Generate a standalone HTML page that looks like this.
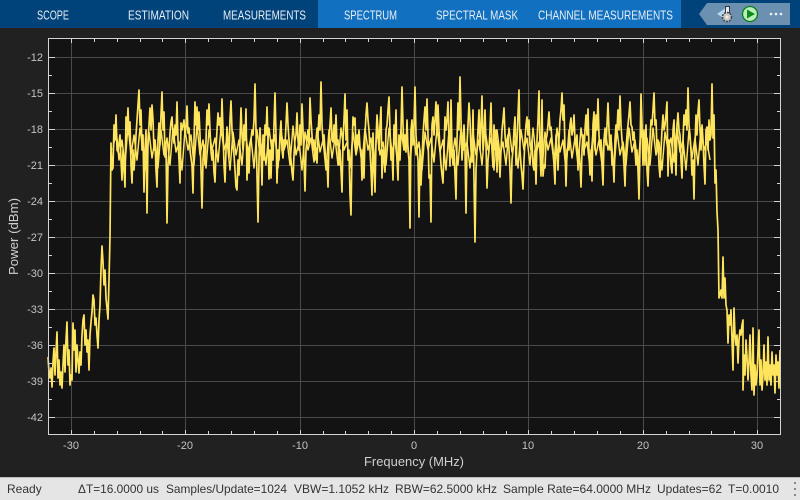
<!DOCTYPE html>
<html><head><meta charset="utf-8"><style>
html,body{margin:0;padding:0;background:#212121;width:800px;height:500px;overflow:hidden}
svg{display:block}
text{font-family:"Liberation Sans",sans-serif}
.tab{font-size:12.5px;fill:#e6eef6}
.t{font-size:11px;fill:#c4c4c4}
.s{font-size:12px;fill:#333}
</style></head><body>
<svg width="800" height="500" viewBox="0 0 800 500" xmlns="http://www.w3.org/2000/svg">
<rect width="800" height="500" fill="#212121"/>
<rect width="800" height="28" fill="#00427a"/>
<rect x="318" width="363" height="28" fill="#1170c0"/>
<text class="tab" x="37" y="19.500" textLength="32" lengthAdjust="spacingAndGlyphs">SCOPE</text>
<text class="tab" x="128" y="19.500" textLength="61" lengthAdjust="spacingAndGlyphs">ESTIMATION</text>
<text class="tab" x="223" y="19.500" textLength="83" lengthAdjust="spacingAndGlyphs">MEASUREMENTS</text>
<text class="tab" x="344" y="19.500" textLength="53" lengthAdjust="spacingAndGlyphs">SPECTRUM</text>
<text class="tab" x="436" y="19.500" textLength="82" lengthAdjust="spacingAndGlyphs">SPECTRAL MASK</text>
<text class="tab" x="538" y="19.500" textLength="135" lengthAdjust="spacingAndGlyphs">CHANNEL MEASUREMENTS</text>
<path d="M707 3H790V25H707L699 14Z" fill="#6b90b0"/>
<path d="M717 14L727 7V20Z" fill="#b5d8f5"/>
<rect x="725.500" y="6.500" width="4" height="9" fill="#e8eef3" stroke="#334" stroke-width="1"/>
<circle cx="727" cy="17" r="4.500" fill="#c8c8c8" stroke="#444" stroke-width="1.500" stroke-dasharray="2 1"/>
<circle cx="727" cy="17" r="1.500" fill="#eee"/>
<circle cx="750" cy="14" r="7.500" fill="#b8f0b8" stroke="#0e7a1e" stroke-width="1.300"/>
<path d="M747 9.500L755 14L747 18.500Z" fill="#0e8a22"/>
<circle cx="771" cy="14" r="1.300" fill="#eef3f7"/><circle cx="776" cy="14" r="1.300" fill="#eef3f7"/><circle cx="781" cy="14" r="1.300" fill="#eef3f7"/>

<rect x="48.500" y="38.500" width="732" height="396" fill="#131313"/>
<path fill="none" stroke="#4a4a4a" stroke-width="1" d="M71.500 39V434M185.500 39V434M300.500 39V434M414.500 39V434M528.500 39V434M643.500 39V434M757.500 39V434M49 57.500H780M49 93.500H780M49 129.500H780M49 165.500H780M49 201.500H780M49 237.500H780M49 273.500H780M49 309.500H780M49 345.500H780M49 381.500H780M49 417.500H780"/>
<path fill="none" stroke="#d4d4d4" stroke-width="1" d="M71.500 39v4M94.500 39v3M117.500 39v3M140.500 39v3M162.500 39v3M185.500 39v4M208.500 39v3M231.500 39v3M254.500 39v3M277.500 39v3M300.500 39v4M323.500 39v3M345.500 39v3M368.500 39v3M391.500 39v3M414.500 39v4M437.500 39v3M460.500 39v3M483.500 39v3M506.500 39v3M528.500 39v4M551.500 39v3M574.500 39v3M597.500 39v3M620.500 39v3M643.500 39v4M666.500 39v3M689.500 39v3M711.500 39v3M734.500 39v3M757.500 39v4
M71.500 434v-4M94.500 434v-3M117.500 434v-3M140.500 434v-3M162.500 434v-3M185.500 434v-4M208.500 434v-3M231.500 434v-3M254.500 434v-3M277.500 434v-3M300.500 434v-4M323.500 434v-3M345.500 434v-3M368.500 434v-3M391.500 434v-3M414.500 434v-4M437.500 434v-3M460.500 434v-3M483.500 434v-3M506.500 434v-3M528.500 434v-4M551.500 434v-3M574.500 434v-3M597.500 434v-3M620.500 434v-3M643.500 434v-4M666.500 434v-3M689.500 434v-3M711.500 434v-3M734.500 434v-3M757.500 434v-4
M49 57.500h6M49 75.500h3M49 93.500h6M49 111.500h3M49 129.500h6M49 147.500h3M49 165.500h6M49 183.500h3M49 201.500h6M49 219.500h3M49 237.500h6M49 255.500h3M49 273.500h6M49 291.500h3M49 309.500h6M49 327.500h3M49 345.500h6M49 363.500h3M49 381.500h6M49 399.500h3M49 417.500h6
M780 57.500h-6M780 75.500h-3M780 93.500h-6M780 111.500h-3M780 129.500h-6M780 147.500h-3M780 165.500h-6M780 183.500h-3M780 201.500h-6M780 219.500h-3M780 237.500h-6M780 255.500h-3M780 273.500h-6M780 291.500h-3M780 309.500h-6M780 327.500h-3M780 345.500h-6M780 363.500h-3M780 381.500h-6M780 399.500h-3M780 417.500h-6"/>

<polyline fill="none" stroke="#ffe45c" stroke-width="1.500" stroke-linejoin="round" points="113,150 116,128 119,160 122,140 125,165 128,125 131,155 134,135 137,160 140,128 143,150 146,170 149,132 152,158 155,140 158,168 161,130 164,155 167,138 170,165 173,128 176,152 179,142 182,170 185,130 188,150 191,135 194,165 197,125 200,155 203,140 206,168 209,130 212,150 215,138 218,162 221,128 224,150 227,140 230,170 233,132 236,155 239,140 242,165 245,128 248,152 251,138 254,168 257,130 260,155 263,142 266,165 269,128 272,152 275,135 278,168 281,130 284,150 287,140 290,165 293,126 296,155 299,142 302,170 305,132 308,150 311,138 314,162 317,128 320,152 323,140 326,170 329,130 332,158 335,138 338,165 341,128 344,150 347,142 350,168 353,132 356,155 359,140 362,165 365,128 368,150 371,138 374,170 377,130 380,155 383,142 386,165 389,128 392,152 395,140 398,168 401,130 404,150 407,138 410,165 413,128 416,155 419,142 422,170 425,132 428,150 431,138 434,162 437,128 440,152 443,140 446,170 449,130 452,158 455,138 458,165 461,128 464,150 467,142 470,168 473,132 476,155 479,140 482,165 485,128 488,150 491,138 494,170 497,130 500,155 503,142 506,165 509,128 512,152 515,140 518,168 521,130 524,150 527,138 530,165 533,128 536,155 539,142 542,170 545,132 548,150 551,138 554,162 557,128 560,152 563,140 566,170 569,130 572,158 575,138 578,165 581,128 584,150 587,142 590,168 593,132 596,155 599,140 602,165 605,128 608,150 611,138 614,170 617,130 620,155 623,142 626,165 629,128 632,152 635,140 638,168 641,130 644,150 647,138 650,165 653,128 656,155 659,142 662,170 665,132 668,150 671,138 674,162 677,128 680,152 683,140 686,170 689,130 692,158 695,138 698,165 701,128 704,150 707,142 710,160"/>
<polyline fill="none" stroke="#ffe45c" stroke-width="1.700" stroke-linejoin="round" points="48,357 49,372 50,378 51,368 52,387 53,362 54,348 55,375 56,352 57,332 58,378 59,360 60,385 61,372 62,388 63,365 64,345 65,372 66,340 67,322 68,365 69,350 70,385 71,375 72,380 73,323 74,350 75,330 76,372 77,345 78,360 79,373 80,352 81,365 82,335 83,320 84,315 85,345 86,330 87,352 88,340 89,370 90,335 91,322 92,312 93,295 94,300 95,325 96,318 97,335 98,348 99,320 100,305 101,270 102,246 103,262 104,285 105,270 106,298 107,308 108,319 109,280 110,237 111,143 112,170 113,168 114,125 115,140 116,115 117,150 118,152 119,143 120,135 121,160 122,180 123,150 124,170 125,187 126,117 127,130 128,108 129,135 130,122 131,165 132,183 133,150 134,170 135,155 136,135 137,120 138,105 139,90 140,125 141,110 142,150 143,135 144,192 145,150 146,130 147,213 148,140 149,125 150,108 151,130 152,105 153,120 154,150 155,140 156,170 157,187 158,140 159,123 160,145 161,115 162,92 163,130 164,112 165,157 166,145 167,223 168,165 169,150 170,133 171,122 172,117 173,135 174,143 175,125 176,135 177,102 178,140 179,160 180,183 181,123 182,130 183,125 184,120 185,135 186,128 187,106 188,133 189,128 190,150 191,158 192,165 193,193 194,140 195,102 196,125 197,107 198,130 199,112 200,135 201,170 202,208 203,160 204,145 205,165 206,140 207,110 208,125 209,104 210,130 211,152 212,160 213,150 214,172 215,182 216,150 217,130 218,113 219,125 220,118 221,135 222,99 223,130 224,165 225,182 226,150 227,127 228,140 229,158 230,120 231,101 232,130 233,145 234,155 235,170 236,187 237,190 238,160 239,175 240,140 241,108 242,135 243,150 244,125 245,140 246,109 247,180 248,150 249,173 250,145 251,140 252,130 253,135 254,120 255,84 256,130 257,175 258,222 259,160 260,128 261,150 262,185 263,135 264,160 265,125 266,135 267,107 268,140 269,179 270,150 271,178 272,140 273,160 274,125 275,93 276,135 277,183 278,150 279,160 280,135 281,121 282,150 283,158 284,140 285,145 286,125 287,103 288,125 289,140 290,150 291,160 292,172 293,180 294,155 295,140 296,135 297,113 298,140 299,150 300,125 301,145 302,104 303,130 304,160 305,191 306,150 307,140 308,130 309,145 310,98 311,120 312,135 313,150 314,140 315,160 316,148 317,163 318,135 319,115 320,130 321,82 322,125 323,140 324,135 325,150 326,165 327,160 328,187 329,140 330,125 331,108 332,140 333,142 334,125 335,140 336,115 337,145 338,140 339,165 340,150 341,170 342,192 343,140 344,120 345,94 346,140 347,110 348,160 349,150 350,195 351,215 352,150 353,117 354,125 355,118 356,150 357,135 358,145 359,130 360,148 361,150 362,180 363,150 364,178 365,135 366,115 367,103 368,120 369,130 370,150 371,170 372,195 373,133 374,170 375,192 376,140 377,115 378,130 379,150 380,125 381,107 382,178 383,150 384,160 385,172 386,130 387,125 388,110 389,97 390,130 391,160 392,150 393,180 394,125 395,140 396,110 397,160 398,180 399,135 400,160 401,130 402,87 403,125 404,150 405,135 406,152 407,120 408,150 409,160 410,228 411,130 412,120 413,145 414,125 415,87 416,135 417,150 418,160 419,217 420,150 421,185 422,160 423,135 424,120 425,107 426,130 427,99 428,135 429,178 430,175 431,222 432,125 433,117 434,135 435,120 436,102 437,130 438,105 439,130 440,150 441,165 442,175 443,183 444,150 445,117 446,130 447,120 448,102 449,140 450,166 451,100 452,150 453,165 454,150 455,175 456,199 457,140 458,103 459,130 460,77 461,120 462,160 463,145 464,125 465,150 466,213 467,145 468,125 469,103 470,120 471,150 472,162 473,110 474,180 475,242 476,170 477,150 478,130 479,110 480,150 481,125 482,96 483,150 484,135 485,110 486,145 487,188 488,160 489,150 490,130 491,103 492,150 493,167 494,125 495,150 496,130 497,172 498,140 499,155 500,177 501,150 502,130 503,120 504,108 505,135 506,147 507,140 508,135 509,150 510,170 511,203 512,160 513,150 514,130 515,117 516,165 517,140 518,115 519,90 520,150 521,165 522,175 523,189 524,160 525,140 526,125 527,117 528,135 529,120 530,145 531,150 532,140 533,165 534,170 535,150 536,184 537,140 538,120 539,91 540,150 541,176 542,100 543,176 544,165 545,168 546,140 547,135 548,125 549,112 550,130 551,127 552,140 553,150 554,165 555,184 556,135 557,150 558,170 559,140 560,120 561,110 562,93 563,120 564,105 565,150 566,186 567,150 568,147 569,150 570,125 571,118 572,135 573,130 574,115 575,140 576,145 577,135 578,170 579,150 580,165 581,187 582,150 583,135 584,155 585,130 586,115 587,135 588,109 589,150 590,175 591,150 592,181 593,125 594,112 595,150 596,115 597,130 598,99 599,135 600,150 601,140 602,165 603,185 604,140 605,130 606,145 607,125 608,103 609,130 610,150 611,135 612,165 613,160 614,182 615,140 616,125 617,130 618,110 619,130 620,96 621,125 622,140 623,150 624,165 625,186 626,150 627,135 628,125 629,115 630,102 631,125 632,127 633,140 634,132 635,150 636,165 637,150 638,170 639,199 640,150 641,94 642,125 643,165 644,130 645,165 646,125 647,170 648,186 649,155 650,140 651,120 652,125 653,110 654,93 655,125 656,120 657,150 658,140 659,165 660,177 661,150 662,130 663,115 664,130 665,125 666,115 667,102 668,176 669,140 670,150 671,165 672,173 673,130 674,120 675,150 676,175 677,125 678,113 679,130 680,135 681,160 682,178 683,140 684,115 685,125 686,110 687,130 688,88 689,125 690,135 691,150 692,175 693,160 694,199 695,145 696,115 697,135 698,112 699,100 700,130 701,150 702,125 703,140 704,165 705,184 706,130 707,127 708,150 709,120 710,140 711,135 712,84 713,138 714,115 715,183 716,170 717,212 718,230 719,298 720,295 721,290 722,298 723,257 724,298 725,278 726,305 727,310 728,343 729,315 730,325 731,310 732,340 733,370 734,308 735,335 736,345 737,335 738,363 739,340 740,330 741,335 742,325 743,320 743,390 744,355 745,375 746,340 747,357 748,380 749,362 750,335 751,375 752,390 753,328 754,395 755,365 756,385 757,375 758,350 759,330 760,385 761,360 762,390 763,375 764,345 765,380 766,362 767,385 768,337 769,380 770,365 771,385 772,352 773,375 774,365 775,393 776,355 777,375 778,362 779,388 780,350"/>

<rect x="48.500" y="38.500" width="732" height="396" fill="none" stroke="#d4d4d4" stroke-width="1"/>

<text class="t" x="43" y="61" text-anchor="end">-12</text><text class="t" x="43" y="97" text-anchor="end">-15</text><text class="t" x="43" y="133" text-anchor="end">-18</text><text class="t" x="43" y="169" text-anchor="end">-21</text><text class="t" x="43" y="205" text-anchor="end">-24</text><text class="t" x="43" y="241" text-anchor="end">-27</text><text class="t" x="43" y="277" text-anchor="end">-30</text><text class="t" x="43" y="313" text-anchor="end">-33</text><text class="t" x="43" y="349" text-anchor="end">-36</text><text class="t" x="43" y="385" text-anchor="end">-39</text><text class="t" x="43" y="421" text-anchor="end">-42</text>
<g text-anchor="middle">
<text class="t" x="71" y="449">-30</text><text class="t" x="185" y="449">-20</text><text class="t" x="300" y="449">-10</text><text class="t" x="414" y="449">0</text><text class="t" x="528" y="449">10</text><text class="t" x="643" y="449">20</text><text class="t" x="757" y="449">30</text>
</g>
<text x="364" y="466" font-size="12.500" fill="#cfcfcf" textLength="100" lengthAdjust="spacingAndGlyphs">Frequency (MHz)</text>
<text transform="translate(18 275) rotate(-90)" font-size="12.500" fill="#cfcfcf" textLength="77" lengthAdjust="spacingAndGlyphs">Power (dBm)</text>

<rect y="477" width="800" height="23" fill="#e5e5e5"/>
<rect y="477" width="800" height="1" fill="#bdbdbd"/>
<text class="s" x="7" y="493">Ready</text>
<text class="s" x="78" y="493" textLength="81" lengthAdjust="spacingAndGlyphs">ΔT=16.0000 us</text>
<text class="s" x="166" y="493" textLength="121" lengthAdjust="spacingAndGlyphs">Samples/Update=1024</text>
<text class="s" x="294" y="493" textLength="95" lengthAdjust="spacingAndGlyphs">VBW=1.1052 kHz</text>
<text class="s" x="395" y="493" textLength="102" lengthAdjust="spacingAndGlyphs">RBW=62.5000 kHz</text>
<text class="s" x="503" y="493" textLength="148" lengthAdjust="spacingAndGlyphs">Sample Rate=64.0000 MHz</text>
<text class="s" x="657" y="493" textLength="65" lengthAdjust="spacingAndGlyphs">Updates=62</text>
<text class="s" x="728" y="493" textLength="51" lengthAdjust="spacingAndGlyphs">T=0.0010</text>
<g fill="#888"><rect x="794" y="482" width="2" height="2"/><rect x="794" y="488" width="2" height="2"/><rect x="794" y="494" width="2" height="2"/></g>
</svg>
</body></html>
